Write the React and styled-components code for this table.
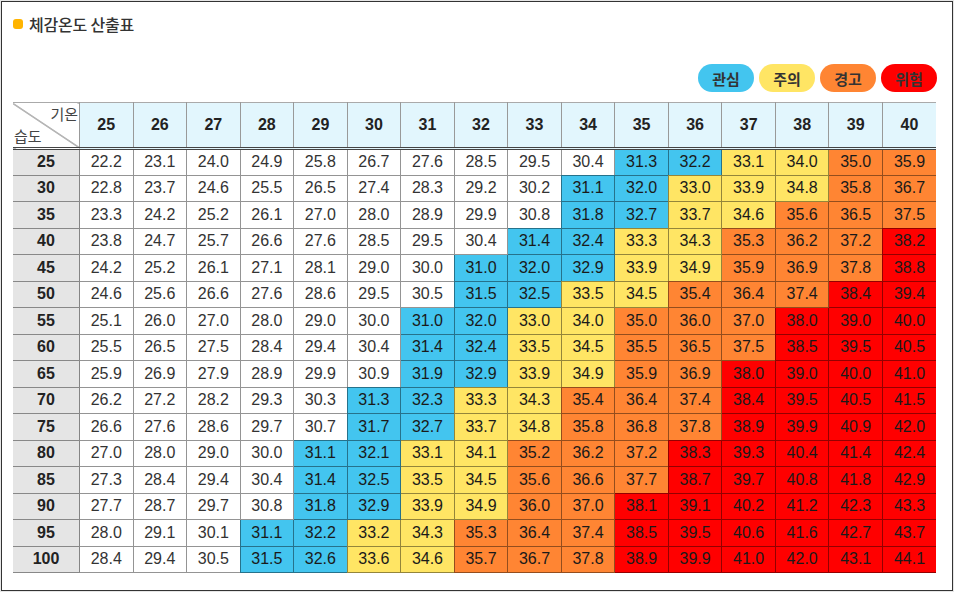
import React from "react";
import styled, { createGlobalStyle } from "styled-components";

const GlobalStyle = createGlobalStyle`
  html, body {
    margin: 0;
    padding: 0;
    background: #e6e6e6;
  }
  body {
    font-family: "Liberation Sans", "Noto Sans CJK KR", Arial, sans-serif;
  }
`;

const TONES = {
  blue: "#43c5ef",
  yellow: "#ffe564",
  orange: "#ff8533",
  red: "#ff0000",
  none: "#ffffff",
};

const Frame = styled.div`
  box-sizing: border-box;
  width: 952px;
  height: 590px;
  margin: 1px;
  border: 1px solid #333;
  background: #fff;
  padding: 12px 15px 0 11px;
`;

const TitleRow = styled.div`
  display: flex;
  align-items: center;
  gap: 6px;
  height: 20px;
`;

const Dot = styled.span`
  width: 10px;
  height: 10px;
  border-radius: 3px;
  background: #ffb400;
`;

const Title = styled.h1`
  margin: 0;
  font-family: "Noto Sans CJK KR", sans-serif;
  font-size: 16px;
  font-weight: 500;
  color: #333;
  letter-spacing: -0.2px;
`;

const Legend = styled.div`
  display: flex;
  justify-content: flex-end;
  gap: 5px;
  margin-top: 30px;
`;

const Pill = styled.span`
  display: flex;
  align-items: center;
  justify-content: center;
  width: 56px;
  height: 28px;
  border-radius: 14px;
  background: ${({ $tone }) => TONES[$tone]};
  font-family: "Noto Sans CJK KR", sans-serif;
  font-size: 15px;
  font-weight: 700;
  color: #333;
`;

const Table = styled.table`
  width: 923px;
  margin-top: 10px;
  border-collapse: collapse;
  table-layout: fixed;
  border-top: 1px solid #aaa;
`;

const HeadCell = styled.th`
  height: 44px;
  padding: 0;
  background: #e2f6fd;
  border-left: 1px solid #999;
  border-bottom: 3px double #444;
  font-size: 16px;
  font-weight: 700;
  color: #222;
  text-align: center;
`;

const CornerCell = styled.th`
  width: 66px;
  padding: 0;
  border-bottom: 3px double #444;
  background: linear-gradient(
    to top right,
    transparent calc(50% - 0.8px),
    #666 50%,
    transparent calc(50% + 0.8px)
  );
`;

const CornerInner = styled.div`
  display: flex;
  flex-direction: column;
  justify-content: space-between;
  height: 40px;
  padding: 2px 1px;
  font-family: "Noto Sans CJK KR", sans-serif;
  font-size: 15px;
  font-weight: 400;
  line-height: 18px;
  color: #444;
`;

const CornerLabel = styled.span`
  align-self: ${({ $end }) => ($end ? "flex-end" : "flex-start")};
`;

const Row = styled.tr`
  height: 26.5px;
`;

const RowHead = styled.th`
  padding: 0;
  background: #e5e5e5;
  border-bottom: 1px solid #888;
  font-size: 16px;
  font-weight: 700;
  color: #222;
  text-align: center;
`;

const Cell = styled.td`
  padding: 0;
  background: ${({ $tone }) => TONES[$tone]};
  border-left: 1px solid rgba(0, 0, 0, 0.42);
  border-bottom: 1px solid rgba(0, 0, 0, 0.42);
  font-size: 16px;
  color: ${({ $tone }) => ($tone === "none" ? "#333" : "#1a1a1a")};
  text-align: center;
`;

const temps = [25, 26, 27, 28, 29, 30, 31, 32, 33, 34, 35, 36, 37, 38, 39, 40];

const rows = [
  [25, "22.2 23.1 24.0 24.9 25.8 26.7 27.6 28.5 29.5 30.4 31.3 32.2 33.1 34.0 35.0 35.9"],
  [30, "22.8 23.7 24.6 25.5 26.5 27.4 28.3 29.2 30.2 31.1 32.0 33.0 33.9 34.8 35.8 36.7"],
  [35, "23.3 24.2 25.2 26.1 27.0 28.0 28.9 29.9 30.8 31.8 32.7 33.7 34.6 35.6 36.5 37.5"],
  [40, "23.8 24.7 25.7 26.6 27.6 28.5 29.5 30.4 31.4 32.4 33.3 34.3 35.3 36.2 37.2 38.2"],
  [45, "24.2 25.2 26.1 27.1 28.1 29.0 30.0 31.0 32.0 32.9 33.9 34.9 35.9 36.9 37.8 38.8"],
  [50, "24.6 25.6 26.6 27.6 28.6 29.5 30.5 31.5 32.5 33.5 34.5 35.4 36.4 37.4 38.4 39.4"],
  [55, "25.1 26.0 27.0 28.0 29.0 30.0 31.0 32.0 33.0 34.0 35.0 36.0 37.0 38.0 39.0 40.0"],
  [60, "25.5 26.5 27.5 28.4 29.4 30.4 31.4 32.4 33.5 34.5 35.5 36.5 37.5 38.5 39.5 40.5"],
  [65, "25.9 26.9 27.9 28.9 29.9 30.9 31.9 32.9 33.9 34.9 35.9 36.9 38.0 39.0 40.0 41.0"],
  [70, "26.2 27.2 28.2 29.3 30.3 31.3 32.3 33.3 34.3 35.4 36.4 37.4 38.4 39.5 40.5 41.5"],
  [75, "26.6 27.6 28.6 29.7 30.7 31.7 32.7 33.7 34.8 35.8 36.8 37.8 38.9 39.9 40.9 42.0"],
  [80, "27.0 28.0 29.0 30.0 31.1 32.1 33.1 34.1 35.2 36.2 37.2 38.3 39.3 40.4 41.4 42.4"],
  [85, "27.3 28.4 29.4 30.4 31.4 32.5 33.5 34.5 35.6 36.6 37.7 38.7 39.7 40.8 41.8 42.9"],
  [90, "27.7 28.7 29.7 30.8 31.8 32.9 33.9 34.9 36.0 37.0 38.1 39.1 40.2 41.2 42.3 43.3"],
  [95, "28.0 29.1 30.1 31.1 32.2 33.2 34.3 35.3 36.4 37.4 38.5 39.5 40.6 41.6 42.7 43.7"],
  [100, "28.4 29.4 30.5 31.5 32.6 33.6 34.6 35.7 36.7 37.8 38.9 39.9 41.0 42.0 43.1 44.1"],
];

const toneOf = (value) => {
  const v = parseFloat(value);
  if (v >= 38) return "red";
  if (v >= 35) return "orange";
  if (v >= 33) return "yellow";
  if (v >= 31) return "blue";
  return "none";
};

const legend = [
  ["관심", "blue"],
  ["주의", "yellow"],
  ["경고", "orange"],
  ["위험", "red"],
];

export default function App() {
  return (
    <>
      <GlobalStyle />
      <Frame>
        <TitleRow>
          <Dot />
          <Title>체감온도 산출표</Title>
        </TitleRow>

        <Legend>
          {legend.map(([label, tone]) => (
            <Pill key={label} $tone={tone}>
              {label}
            </Pill>
          ))}
        </Legend>

        <Table>
          <thead>
            <tr>
              <CornerCell>
                <CornerInner>
                  <CornerLabel $end>기온</CornerLabel>
                  <CornerLabel>습도</CornerLabel>
                </CornerInner>
              </CornerCell>
              {temps.map((t) => (
                <HeadCell key={t}>{t}</HeadCell>
              ))}
            </tr>
          </thead>
          <tbody>
            {rows.map(([humidity, line]) => (
              <Row key={humidity}>
                <RowHead>{humidity}</RowHead>
                {line.split(" ").map((value, i) => (
                  <Cell key={i} $tone={toneOf(value)}>
                    {value}
                  </Cell>
                ))}
              </Row>
            ))}
          </tbody>
        </Table>
      </Frame>
    </>
  );
}
